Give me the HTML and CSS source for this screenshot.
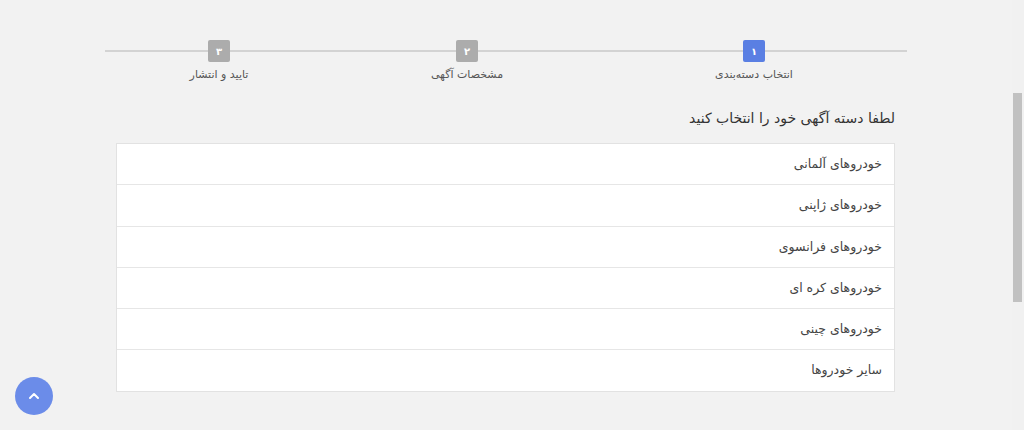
FILE: index.html
```html
<!DOCTYPE html>
<html lang="fa" dir="rtl">
  <head>
    <meta charset="UTF-8" />
    <meta name="viewport" content="width=device-width, initial-scale=1.0" />
    <title>ثبت آگهی</title>
    <link rel="stylesheet" href="styles.css">
  </head>
  <body>
    <div class="page">
      <div class="steps">
        <div class="step active">
          <span class="step-num">۱</span>
          <span class="step-label">انتخاب دسته‌بندی</span>
        </div>
        <div class="step">
          <span class="step-num">۲</span>
          <span class="step-label">مشخصات آگهی</span>
        </div>
        <div class="step">
          <span class="step-num">۳</span>
          <span class="step-label">تایید و انتشار</span>
        </div>
      </div>

      <div class="content">
        <h2 class="title">لطفا دسته آگهی خود را انتخاب کنید</h2>
        <ul class="categories">
          <li>خودروهای آلمانی</li>
          <li>خودروهای ژاپنی</li>
          <li>خودروهای فرانسوی</li>
          <li>خودروهای کره ای</li>
          <li>خودروهای چینی</li>
          <li>سایر خودروها</li>
        </ul>
      </div>
    </div>

    <button class="to-top" aria-label="بالا">
      <svg width="12" height="8" viewBox="0 0 12 8">
        <path d="M2 6 L6 2 L10 6" fill="none" stroke="#fff" stroke-width="2" stroke-linecap="round" stroke-linejoin="round" />
      </svg>
    </button>

    <div class="scrollbar"><div class="thumb"></div></div>
  </body>
</html>
```

FILE: styles.css
```css
html,
body {
  height: 100%;
}
body {
  font-family: "DejaVu Sans", sans-serif;
  margin: 0;
  padding: 0 12px 0 0;
  background-color: #f2f2f2;
  color: #333;
  overflow: hidden;
}
.page {
  width: 802px;
  margin: 0 auto;
  padding-top: 40px;
}
.steps {
  display: grid;
  grid-template-columns: 306px 268px 228px;
  background: linear-gradient(#d3d3d3, #d3d3d3) no-repeat 0 10px / 100% 2px;
}
.step {
  display: flex;
  flex-direction: column;
  align-items: center;
}
.step-num {
  width: 22px;
  height: 22px;
  border-radius: 2px;
  background-color: #acacac;
  color: white;
  font-size: 10px;
  font-weight: bold;
  display: flex;
  align-items: center;
  justify-content: center;
}
.step.active .step-num {
  background-color: #5a7fe3;
}
.step-label {
  margin-top: 6px;
  font-size: 11px;
  color: #555;
}
.content {
  padding: 0 12px 0 11px;
}
.title {
  font-size: 14px;
  font-weight: normal;
  color: #333;
  margin: 29px 0 17px;
}
.categories {
  list-style-type: none;
  padding: 0;
  margin: 0;
  background-color: #fff;
  border: 1px solid #e2e2e2;
}
.categories li {
  height: 40.3px;
  line-height: 40.3px;
  padding: 0 12px;
  font-size: 12.5px;
  color: #444;
  border-bottom: 1px solid #e6e6e6;
}
.categories li:last-child {
  border-bottom: none;
}
.to-top {
  position: fixed;
  left: 15px;
  bottom: 15px;
  width: 38px;
  height: 38px;
  border-radius: 50%;
  border: none;
  background-color: #6b8ce9;
  display: flex;
  align-items: center;
  justify-content: center;
  padding: 0;
  cursor: pointer;
}
.scrollbar {
  position: fixed;
  top: 0;
  right: 0;
  width: 12px;
  height: 100%;
  background-color: #f1f1f1;
}
.thumb {
  margin: 93px 2px 0 1px;
  height: 209px;
  background-color: #c1c1c1;
}
```
